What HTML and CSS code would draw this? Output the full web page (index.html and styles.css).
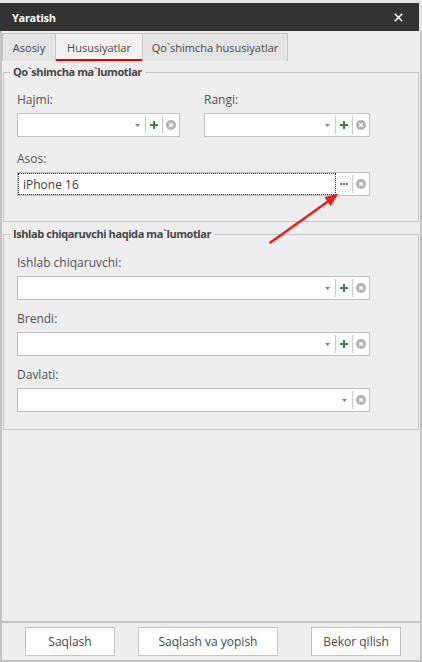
FILE: index.html
```html
<!DOCTYPE html>
<html>
<head>
<meta charset="utf-8">
<link rel="stylesheet" href="styles.css">
</head>
<body>
<div class="win">
  <header class="titlebar">
    <span class="title">Yaratish</span>
    <svg class="close" width="9" height="9" viewBox="0 0 9 9"><path d="M0.8 0.8L8.2 8.2M8.2 0.8L0.8 8.2" stroke="#fff" stroke-width="1.5"/></svg>
  </header>
  <div class="body">
    <nav class="tabs">
      <div class="tab t1">Asosiy</div>
      <div class="tab t2 active">Hususiyatlar</div>
      <div class="tab t3">Qo`shimcha hususiyatlar</div>
    </nav>
    <main class="panel">
      <fieldset class="group g1">
        <legend>Qo`shimcha ma`lumotlar</legend>
        <div class="content">
          <div class="grid2">
            <div class="field">
              <label>Hajmi:</label>
              <div class="combo">
                <div class="ctext"></div>
                <span class="cell arrow"><svg width="5" height="3" viewBox="0 0 5 3"><polygon points="0,0 5,0 2.5,3" fill="#808080"/></svg></span>
                <span class="cell sep plus"><svg width="8" height="8" viewBox="0 0 8 8"><path d="M4 0V8M0 4H8" stroke="#2f8a4c" stroke-width="2"/></svg></span>
                <span class="cell sep clear"><svg width="10" height="10" viewBox="0 0 10 10"><circle cx="5" cy="5" r="5" fill="#b3b3b3"/><path d="M3.2 3.2L6.8 6.8M6.8 3.2L3.2 6.8" stroke="#fff" stroke-width="1.4"/></svg></span>
              </div>
            </div>
            <div class="field">
              <label>Rangi:</label>
              <div class="combo">
                <div class="ctext"></div>
                <span class="cell arrow"><svg width="5" height="3" viewBox="0 0 5 3"><polygon points="0,0 5,0 2.5,3" fill="#808080"/></svg></span>
                <span class="cell sep plus"><svg width="8" height="8" viewBox="0 0 8 8"><path d="M4 0V8M0 4H8" stroke="#2f8a4c" stroke-width="2"/></svg></span>
                <span class="cell sep clear"><svg width="10" height="10" viewBox="0 0 10 10"><circle cx="5" cy="5" r="5" fill="#b3b3b3"/><path d="M3.2 3.2L6.8 6.8M6.8 3.2L3.2 6.8" stroke="#fff" stroke-width="1.4"/></svg></span>
              </div>
            </div>
          </div>
          <div class="field row2">
            <label>Asos:</label>
            <div class="combo">
              <div class="ctext focus">iPhone 16</div>
              <span class="cell dots"><svg width="8" height="2" viewBox="0 0 8 2"><rect x="0" y="0" width="2" height="2" fill="#707070"/><rect x="3" y="0" width="2" height="2" fill="#707070"/><rect x="6" y="0" width="2" height="2" fill="#707070"/></svg></span>
              <span class="cell sep clear"><svg width="10" height="10" viewBox="0 0 10 10"><circle cx="5" cy="5" r="5" fill="#b3b3b3"/><path d="M3.2 3.2L6.8 6.8M6.8 3.2L3.2 6.8" stroke="#fff" stroke-width="1.4"/></svg></span>
            </div>
          </div>
        </div>
      </fieldset>
      <fieldset class="group g2">
        <legend>Ishlab chiqaruvchi haqida ma`lumotlar</legend>
        <div class="content stack">
          <div class="field">
            <label>Ishlab chiqaruvchi:</label>
            <div class="combo">
              <div class="ctext"></div>
              <span class="cell arrow"><svg width="5" height="3" viewBox="0 0 5 3"><polygon points="0,0 5,0 2.5,3" fill="#808080"/></svg></span>
              <span class="cell sep plus"><svg width="8" height="8" viewBox="0 0 8 8"><path d="M4 0V8M0 4H8" stroke="#2f8a4c" stroke-width="2"/></svg></span>
              <span class="cell sep clear"><svg width="10" height="10" viewBox="0 0 10 10"><circle cx="5" cy="5" r="5" fill="#b3b3b3"/><path d="M3.2 3.2L6.8 6.8M6.8 3.2L3.2 6.8" stroke="#fff" stroke-width="1.4"/></svg></span>
            </div>
          </div>
          <div class="field">
            <label>Brendi:</label>
            <div class="combo">
              <div class="ctext"></div>
              <span class="cell arrow"><svg width="5" height="3" viewBox="0 0 5 3"><polygon points="0,0 5,0 2.5,3" fill="#808080"/></svg></span>
              <span class="cell sep plus"><svg width="8" height="8" viewBox="0 0 8 8"><path d="M4 0V8M0 4H8" stroke="#2f8a4c" stroke-width="2"/></svg></span>
              <span class="cell sep clear"><svg width="10" height="10" viewBox="0 0 10 10"><circle cx="5" cy="5" r="5" fill="#b3b3b3"/><path d="M3.2 3.2L6.8 6.8M6.8 3.2L3.2 6.8" stroke="#fff" stroke-width="1.4"/></svg></span>
            </div>
          </div>
          <div class="field">
            <label>Davlati:</label>
            <div class="combo">
              <div class="ctext"></div>
              <span class="cell arrow"><svg width="5" height="3" viewBox="0 0 5 3"><polygon points="0,0 5,0 2.5,3" fill="#808080"/></svg></span>
              <span class="cell sep clear"><svg width="10" height="10" viewBox="0 0 10 10"><circle cx="5" cy="5" r="5" fill="#b3b3b3"/><path d="M3.2 3.2L6.8 6.8M6.8 3.2L3.2 6.8" stroke="#fff" stroke-width="1.4"/></svg></span>
            </div>
          </div>
        </div>
      </fieldset>
    </main>
    <footer class="footer">
      <button class="btn b1">Saqlash</button>
      <button class="btn b2">Saqlash va yopish</button>
      <button class="btn b3">Bekor qilish</button>
    </footer>
  </div>
</div>
<svg class="annot" width="422" height="662" viewBox="0 0 422 662">
  <line x1="270.5" y1="242.5" x2="330" y2="200" stroke="#ee1c1c" stroke-width="2.6" stroke-linecap="round"/>
  <polygon points="338.5,193.5 330.6,206 324.4,197.3" fill="#ee1c1c"/>
</svg>
</body>
</html>
```
FILE: styles.css
```css
* { box-sizing: border-box; }
html, body { margin: 0; padding: 0; }
body {
  width: 422px;
  height: 662px;
  overflow: hidden;
  position: relative;
  background: #e4e4e4;
  font-family: "Open Sans", "Noto Sans", sans-serif;
  color: #4e4e4e;
}
.win {
  width: 422px;
  height: 662px;
  display: flex;
  flex-direction: column;
  border-top: 3px solid #e4e4e4;
}
.titlebar {
  flex: none;
  height: 28px;
  width: 419px;
  background: #333333;
  color: #fff;
  display: flex;
  align-items: center;
  justify-content: space-between;
  padding: 0 16px 0 12px;
}
.title { font-weight: 700; font-size: 11px; letter-spacing: -0.3px; }
.body {
  flex: 1;
  min-height: 0;
  display: flex;
  flex-direction: column;
  background: #eeeeee;
  border-left: 2px solid #c2c2c2;
  border-right: 2px solid #c2c2c2;
  border-bottom: 2px solid #c2c2c2;
}
.tabs {
  flex: none;
  height: 30px;
  display: flex;
  align-items: flex-end;
}
.tab {
  height: 28px;
  display: flex;
  align-items: center;
  justify-content: center;
  font-size: 11px;
  color: #484848;
  border: 1px solid #c4c4c4;
  border-bottom: none;
  background: #e4e4e4;
}
.t1 { width: 54px; }
.t2 { width: 88px; margin-left: -1px; }
.t3 { width: 146px; margin-left: -1px; }
.tab.active {
  background: #f1f1f1;
  box-shadow: inset 0 -2px 0 #e50000;
}
.panel {
  flex: 1;
  min-height: 0;
  padding: 3px 1px 0;
}
.group {
  margin: 0;
  border: 1px solid #c6c6c6;
  padding: 11px 0 25px 6px;
  min-width: 0;
}
.group legend {
  padding: 0 3px;
  font-weight: 700;
  font-size: 11px;
  letter-spacing: -0.42px;
  line-height: 16px;
  color: #454545;
}
.g2 { margin-top: 4px; padding-top: 12px; padding-bottom: 17px; }
.content { padding-left: 7px; width: 360px; }
.grid2 {
  display: grid;
  grid-template-columns: 163px 166px;
  column-gap: 24px;
}
.row2 { margin-top: 13px; }
.stack { display: flex; flex-direction: column; gap: 10px; }
.field { display: flex; flex-direction: column; }
.field label {
  font-size: 12px;
  line-height: 18px;
  margin-bottom: 4px;
  color: #525252;
}
.combo {
  height: 24px;
  width: 100%;
  background: #fff;
  border: 1px solid #c3c3c3;
  display: flex;
  align-items: stretch;
}
.g2 .combo { width: 353px; }
.ctext {
  flex: 1;
  font-size: 12px;
  color: #3c3c3c;
  display: flex;
  align-items: center;
  padding-left: 4px;
}
.ctext.focus { border: 1px dotted #333; }
.cell {
  flex: none;
  width: 16px;
  display: flex;
  align-items: center;
  justify-content: center;
  position: relative;
}
.cell svg { display: block; }
.cell.sep { width: 17px; padding-left: 1px; }
.cell.sep::before {
  content: "";
  position: absolute;
  left: 0;
  top: 2px;
  bottom: 2px;
  width: 1px;
  background: #cacaca;
}
.footer {
  flex: none;
  height: 39px;
  border-top: 2px solid #c2c2c2;
  display: flex;
  align-items: flex-start;
  padding: 4px 0 0 23px;
}
.btn {
  height: 29px;
  background: #fff;
  border: 1px solid #c3c3c3;
  font-family: "Open Sans", "Noto Sans", sans-serif;
  font-size: 12px;
  color: #484848;
  padding: 0;
}
.b1 { width: 90px; }
.b2 { width: 140px; margin-left: 23px; }
.b3 { width: 90px; margin-left: 33px; }
.annot {
  position: absolute;
  left: 0;
  top: 0;
  pointer-events: none;
}
```
